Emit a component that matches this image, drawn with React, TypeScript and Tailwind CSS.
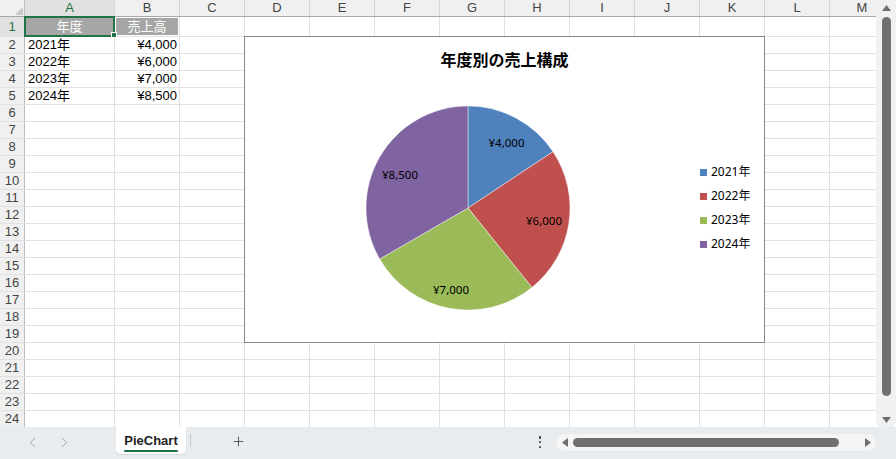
import { ChevronLeft, ChevronRight, Plus } from "lucide-react";

const font = "font-['Liberation_Sans','Noto_Sans_CJK_JP',sans-serif]";

const cols = [
  { k: "A", w: "w-[90px]" },
  { k: "B", w: "w-[65px]" },
  { k: "C", w: "w-[65px]" },
  { k: "D", w: "w-[65px]" },
  { k: "E", w: "w-[65px]" },
  { k: "F", w: "w-[65px]" },
  { k: "G", w: "w-[65px]" },
  { k: "H", w: "w-[65px]" },
  { k: "I", w: "w-[65px]" },
  { k: "J", w: "w-[65px]" },
  { k: "K", w: "w-[65px]" },
  { k: "L", w: "w-[65px]" },
  { k: "M", w: "w-[65px]" },
];

const sales = [
  { year: "2021年", value: 4000, color: "#4f81bd", lx: 261.5, ly: 71 },
  { year: "2022年", value: 6000, color: "#c0504d", lx: 299, ly: 149 },
  { year: "2023年", value: 7000, color: "#9bbb59", lx: 206, ly: 218 },
  { year: "2024年", value: 8500, color: "#8064a2", lx: 155, ly: 103 },
];

const yen = (v: number) => `¥${v.toLocaleString("en-US")}`;

const PieChart = () => {
  const cx = 223;
  const cy = 137;
  const r = 102;
  const total = sales.reduce((s, d) => s + d.value, 0);
  let acc = 0;
  const pt = (a: number) => [cx + r * Math.sin(a), cy - r * Math.cos(a)];

  return (
    <div className="absolute left-[244px] top-[36px] flex h-[307px] w-[521px] flex-col border border-[#878787] bg-white">
      <div className="pt-[14px] text-center text-[16px] font-bold leading-[20px] text-black">年度別の売上構成</div>
      <div className="flex">
        <svg width="440" height="270" className="shrink-0">
          {sales.map((d) => {
            const a0 = (acc / total) * Math.PI * 2;
            acc += d.value;
            const a1 = (acc / total) * Math.PI * 2;
            const [x0, y0] = pt(a0);
            const [x1, y1] = pt(a1);
            const large = a1 - a0 > Math.PI ? 1 : 0;
            return (
              <path
                key={d.year}
                d={`M${cx},${cy} L${x0},${y0} A${r},${r} 0 ${large} 1 ${x1},${y1} Z`}
                fill={d.color}
                stroke="#ffffff"
                strokeOpacity="0.55"
                strokeWidth="0.8"
              />
            );
          })}
          {sales.map((d) => (
            <text
              key={d.year}
              x={d.lx}
              y={d.ly}
              textAnchor="middle"
              dominantBaseline="central"
              fontSize="11.5"
              fontFamily="Noto Sans, sans-serif"
              fill="#000"
            >
              {yen(d.value)}
            </text>
          ))}
        </svg>
        <div className="ml-[15px] mt-[89px] flex flex-col font-['Noto_Sans','Noto_Sans_CJK_JP',sans-serif] text-[12px] text-black">
          {sales.map((d) => (
            <div key={d.year} className="flex h-[24px] items-center gap-[4px]">
              <span className="h-[7px] w-[7px]" style={{ backgroundColor: d.color }} />
              <span>{d.year}</span>
            </div>
          ))}
        </div>
      </div>
    </div>
  );
};

const Sheet = () => {
  const rows = Array.from({ length: 23 }, (_, i) => i + 2);
  return (
    <div className="relative h-[427px] w-[876px] shrink-0 overflow-hidden bg-white">
      {/* column header */}
      <div className="flex h-[17px] border-b border-[#a8a8a8] bg-[#f0f0f0] text-[13px] leading-[16px] text-[#444]">
        <div className="relative w-[25px] shrink-0 border-r border-[#bdbdbd]">
          <svg width="8" height="8" className="absolute bottom-[1px] right-[1px]">
            <polygon points="8,0 8,8 0,8" fill="#c8c8c8" />
          </svg>
        </div>
        {cols.map((c) => (
          <div
            key={c.k}
            className={`${c.w} shrink-0 border-r border-[#d6d6d6] text-center ${
              c.k === "A" ? "bg-[#e1e1e1] text-[#217346]" : ""
            }`}
          >
            {c.k}
          </div>
        ))}
      </div>

      {/* row 1 */}
      <div className="flex h-[20px] border-b border-[#e1e1e1] text-[13px]">
        <div className="w-[25px] shrink-0 border-r border-[#bdbdbd] bg-[#e1e1e1] text-center leading-[19px] text-[#217346]">1</div>
        {cols.map((c, i) => (
          <div key={c.k} className={`${c.w} shrink-0 border-r border-[#e1e1e1]`}>
            {i < 2 && (
              <div className="mx-[1px] mt-[1px] h-[17px] bg-[#a6a6a6] text-center leading-[17px] text-white">
                {i === 0 ? "年度" : "売上高"}
              </div>
            )}
          </div>
        ))}
      </div>

      {rows.map((n) => {
        const d = sales[n - 2];
        return (
          <div key={n} className="flex h-[17px] border-b border-[#e1e1e1] text-[13px] leading-[16px] text-black">
            <div className="w-[25px] shrink-0 border-r border-[#bdbdbd] bg-[#f0f0f0] text-center text-[#444]">{n}</div>
            {cols.map((c, i) => (
              <div
                key={c.k}
                className={`${c.w} shrink-0 border-r border-[#e1e1e1] ${i === 0 ? "pl-[3px]" : "pr-[2px] text-right"}`}
              >
                {d && i === 0 && d.year}
                {d && i === 1 && yen(d.value)}
              </div>
            ))}
          </div>
        );
      })}

      {/* selection */}
      <div className="absolute left-[24px] top-[16px] h-[21px] w-[91px] border-2 border-[#217346]" />
      <div className="absolute left-[111px] top-[32px] h-[6px] w-[6px] border border-white bg-[#217346]" />

      <PieChart />
    </div>
  );
};

const VScroll = () => (
  <div className="flex h-[429px] w-[20px] shrink-0 flex-col items-center rounded-b-[8px] bg-[#f1f1f1] pl-[1px]">
    <svg width="9" height="6" className="mt-[5px]">
      <polygon points="4.5,0 9,6 0,6" fill="#6e6e6e" />
    </svg>
    <div className="mt-[6px] h-[379px] w-[9px] rounded-full bg-[#707070]" />
    <svg width="9" height="6" className="mt-auto mb-[6px]">
      <polygon points="0,0 9,0 4.5,6" fill="#6e6e6e" />
    </svg>
  </div>
);

const BottomBar = () => (
  <div className="flex h-[32px] items-start bg-[#e9ecef] text-[#333]">
    <div className="flex pl-[16px] pt-[6px] text-[#9c9c9c]">
      <div className="flex h-[18px] w-[32px] items-center justify-center">
        <ChevronLeft size={17} strokeWidth={1.3} />
      </div>
      <div className="flex h-[18px] w-[32px] items-center justify-center">
        <ChevronRight size={17} strokeWidth={1.3} />
      </div>
    </div>
    <div className="ml-[36px] flex h-[27px] w-[70px] flex-col items-center rounded-b-[5px] bg-white pt-[5px] shadow-[0_1px_1px_rgba(0,0,0,0.08)]">
      <span className="text-[13px] font-bold leading-[18px] text-[#222]">PieChart</span>
      <span className="h-[2px] w-[54px] rounded-full bg-[#217346]" />
    </div>
    <div className="ml-[4px] mt-[7px] h-[13px] w-[1px] bg-[#c4c4c4]" />
    <div className="ml-[39px] mt-[6px] flex h-[16px] w-[16px] items-center justify-center text-[#333]">
      <Plus size={15} strokeWidth={1.2} />
    </div>

    <div className="ml-auto mr-[20px] flex items-start">
      <div className="mt-[9px] flex h-[12px] w-[16px] flex-col items-center justify-between">
        <span className="h-[2.5px] w-[2.5px] rounded-full bg-[#333]" />
        <span className="h-[2.5px] w-[2.5px] rounded-full bg-[#333]" />
        <span className="h-[2.5px] w-[2.5px] rounded-full bg-[#333]" />
      </div>
      <div className="ml-[8px] mt-[7px] flex h-[17px] w-[320px] items-center rounded-full bg-[#f5f5f5] pl-[6px] pr-[5px]">
        <svg width="6" height="9">
          <polygon points="0,4.5 6,0 6,9" fill="#6e6e6e" />
        </svg>
        <div className="ml-[5px] h-[9px] w-[266px] rounded-full bg-[#707070]" />
        <svg width="6" height="9" className="ml-auto">
          <polygon points="0,0 6,4.5 0,9" fill="#6e6e6e" />
        </svg>
      </div>
    </div>
  </div>
);

export default function App() {
  return (
    <div className={`flex h-[459px] w-[896px] flex-col overflow-hidden bg-[#e9ecef] ${font}`}>
      <div className="flex h-[427px] items-start overflow-visible bg-white">
        <Sheet />
        <VScroll />
      </div>
      <BottomBar />
    </div>
  );
}
